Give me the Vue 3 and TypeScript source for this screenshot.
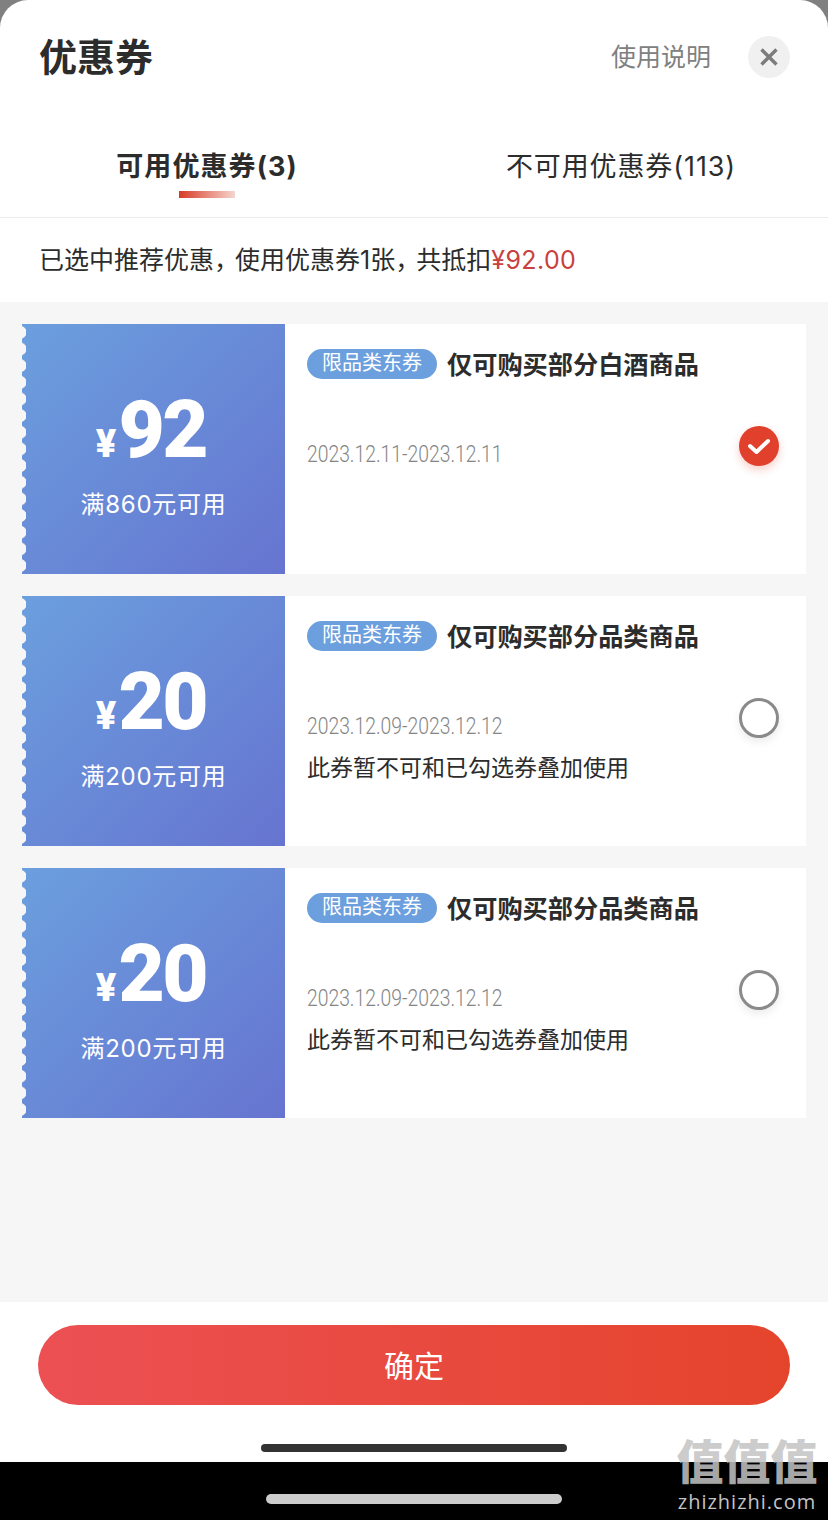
<script setup lang="ts">
interface Coupon {
  amount: number
  limit: string
  title: string
  date: string
  note?: string
  checked: boolean
}

const coupons: Coupon[] = [
  { amount: 92, limit: '满860元可用', title: '仅可购买部分白酒商品', date: '2023.12.11-2023.12.11', checked: true },
  { amount: 20, limit: '满200元可用', title: '仅可购买部分品类商品', date: '2023.12.09-2023.12.12', note: '此券暂不可和已勾选券叠加使用', checked: false },
  { amount: 20, limit: '满200元可用', title: '仅可购买部分品类商品', date: '2023.12.09-2023.12.12', note: '此券暂不可和已勾选券叠加使用', checked: false },
]
</script>

<template>
  <div class="screen">
    <div class="sheet">
      <header class="head">
        <h1 class="title">优惠券</h1>
        <div class="head-right">
          <span class="help">使用说明</span>
          <span class="close">
            <svg width="20" height="20" viewBox="0 0 20 20">
              <path d="M2.5 2.5 17.5 17.5M17.5 2.5 2.5 17.5" stroke="#7c7c7c" stroke-width="3.4" fill="none" />
            </svg>
          </span>
        </div>
      </header>

      <nav class="tabs">
        <div class="tab active">
          <span>可用优惠券(3)</span>
          <i class="tab-line"></i>
        </div>
        <div class="tab">
          <span>不可用优惠券(113)</span>
        </div>
      </nav>

      <div class="summary">
        <span>已选中推荐优惠<span class="punct">，</span>使用优惠券1张<span class="punct">，</span>共抵扣<em>¥92.00</em></span>
      </div>

      <main class="list">
        <article v-for="(c, idx) in coupons" :key="idx" class="coupon">
          <div class="coupon-left">
            <div class="amount"><small>¥</small>{{ c.amount }}</div>
            <div class="limit">{{ c.limit }}</div>
          </div>
          <div class="coupon-right">
            <div class="coupon-head">
              <span class="tag">限品类东券</span>
              <span class="coupon-title">{{ c.title }}</span>
            </div>
            <div class="date">{{ c.date }}</div>
            <div v-if="c.note" class="note">{{ c.note }}</div>
            <span class="radio" :class="{ checked: c.checked }">
              <svg v-if="c.checked" width="24" height="18" viewBox="0 0 24 18">
                <path d="M3 9 9.5 15 21 4" stroke="#fff" stroke-width="4" fill="none" stroke-linecap="round" stroke-linejoin="round" />
              </svg>
            </span>
          </div>
        </article>
      </main>

      <footer class="foot">
        <button class="confirm">确定</button>
        <div class="home-bar"></div>
      </footer>
    </div>

    <div class="nav-strip">
      <div class="nav-bar"></div>
    </div>

    <div class="watermark">
      <div class="wm-cn">值值值</div>
      <div class="wm-en">zhizhizhi.com</div>
    </div>
  </div>
</template>

<style scoped>
.screen {
  position: relative;
  width: 828px;
  height: 1520px;
  background: #808080;
  overflow: hidden;
  font-family: Inter, "Noto Sans CJK SC", "Noto Sans", sans-serif;
  color: #2c2c2c;
}

.sheet {
  height: 1462px;
  background: #fff;
  border-radius: 28px 28px 0 0;
  display: flex;
  flex-direction: column;
}

/* header */
.head {
  height: 114px;
  padding: 0 38px 0 40px;
  display: flex;
  align-items: center;
  justify-content: space-between;
  box-sizing: border-box;
}

.title {
  margin: 0 0 0 -1px;
  font-size: 38px;
  line-height: 50px;
  font-weight: 700;
}

.head-right {
  display: flex;
  align-items: center;
  gap: 37px;
}

.help {
  font-size: 25px;
  line-height: 36px;
  color: #808080;
}

.close {
  width: 42px;
  height: 42px;
  border-radius: 50%;
  background: #f0f0f0;
  display: flex;
  align-items: center;
  justify-content: center;
}

/* tabs */
.tabs {
  height: 103px;
  border-bottom: 1px solid #ececec;
  display: flex;
}

.tab {
  flex: 1;
  display: flex;
  flex-direction: column;
  align-items: center;
  padding-top: 33px;
  font-size: 27px;
  line-height: 40px;
  letter-spacing: 0.9px;
  color: #2c2c2c;
}

.tab.active {
  font-weight: 700;
  letter-spacing: 1.1px;
}

.tab-line {
  width: 56px;
  height: 7px;
  margin-top: 4px;
  background: linear-gradient(90deg, #d83a26 0%, #f6d5cf 100%);
}

/* summary */
.summary {
  height: 84px;
  padding: 0 0 4px 39px;
  box-sizing: border-box;
  display: flex;
  align-items: center;
  font-size: 25px;
  color: #2c2c2c;
  white-space: nowrap;
}

.punct {
  letter-spacing: -4px;
}

.summary em {
  font-style: normal;
  color: #c9413f;
  letter-spacing: 0.4px;
}

/* coupon list */
.list {
  flex: 1;
  background: #f6f6f6;
  padding: 22px 22px 0;
  display: flex;
  flex-direction: column;
  gap: 22px;
}

.coupon {
  height: 250px;
  width: 784px;
  display: flex;
  background: #fff;
}

.coupon-left {
  position: relative;
  width: 263px;
  flex-shrink: 0;
  display: flex;
  flex-direction: column;
  align-items: center;
  background: linear-gradient(135deg, #6b9fde 0%, #6674d0 100%);
  color: #fff;
}

.coupon-left::before {
  content: "";
  position: absolute;
  left: 0;
  top: 0;
  bottom: 0;
  width: 4px;
  background: radial-gradient(circle at -2px 8.33px, #f6f6f6 6.2px, transparent 6.8px) 0 0 / 4px 16.67px repeat-y;
}

.amount {
  margin-top: 56px;
  padding-right: 5px;
  font-family: Roboto, sans-serif;
  font-size: 80px;
  line-height: 100px;
  font-weight: 900;
  display: flex;
  align-items: baseline;
  letter-spacing: -2.5px;
}

.amount small {
  font-size: 38px;
  line-height: 1;
  letter-spacing: 0;
  margin-right: 2px;
}

.limit {
  margin-top: 8px;
  font-size: 24px;
  line-height: 34px;
  letter-spacing: 0.7px;
}

.coupon-right {
  position: relative;
  flex: 1;
  padding: 23px 0 0 22px;
}

.coupon-head {
  display: flex;
  align-items: center;
  gap: 10px;
}

.tag {
  width: 130px;
  height: 30px;
  border-radius: 15px;
  background: #6b9fde;
  color: #fff;
  font-size: 20px;
  line-height: 28px;
  text-align: center;
}

.coupon-title {
  padding-top: 2px;
  font-size: 25.2px;
  line-height: 32px;
  font-weight: 700;
  color: #2c2c2c;
}

.date {
  margin-top: 58px;
  font-family: Roboto, sans-serif;
  font-size: 23px;
  line-height: 32px;
  color: #858585;
  font-weight: 300;
  transform: scaleX(0.84);
  transform-origin: left center;
  white-space: nowrap;
}

.note {
  margin-top: 10px;
  font-size: 23px;
  line-height: 30px;
  color: #2c2c2c;
}

.radio {
  position: absolute;
  right: 27px;
  top: 102px;
  width: 40px;
  height: 40px;
  box-sizing: border-box;
  border-radius: 50%;
  border: 3.5px solid #8a8a8a;
  box-shadow: 0 4px 8px rgba(0, 0, 0, 0.08);
  display: flex;
  align-items: center;
  justify-content: center;
}

.radio.checked {
  border: 0;
  background: #e0402c;
  box-shadow: 0 4px 8px rgba(224, 64, 44, 0.25);
}

/* footer */
.foot {
  height: 160px;
  padding-top: 23px;
  box-sizing: border-box;
  background: #fff;
  display: flex;
  flex-direction: column;
  align-items: center;
}

.confirm {
  width: 752px;
  height: 80px;
  border: 0;
  padding: 0 0 2px;
  border-radius: 40px;
  background: linear-gradient(90deg, #ec5053 0%, #e5442c 100%);
  color: #fff;
  font-family: inherit;
  font-size: 30px;
}

.home-bar {
  width: 306px;
  height: 8px;
  margin-top: 39px;
  border-radius: 4px;
  background: #333;
}

.nav-strip {
  height: 58px;
  background: #000;
  display: flex;
  justify-content: center;
  padding-top: 32px;
  box-sizing: border-box;
}

.nav-bar {
  width: 296px;
  height: 10px;
  border-radius: 5px;
  background: #ccc;
}

/* site watermark */
.watermark {
  position: absolute;
  right: 9px;
  bottom: 8px;
  width: 144px;
  text-align: center;
  color: #c4c4c4;
}

.wm-cn {
  font-size: 47px;
  line-height: 48px;
  font-weight: 900;
  opacity: 0.85;
  margin-bottom: 6px;
}

.wm-en {
  font-family: "Open Sans", sans-serif;
  font-size: 20px;
  line-height: 20px;
  letter-spacing: 1px;
  white-space: nowrap;
}
</style>

<style>
html, body { margin: 0; padding: 0; }
</style>
